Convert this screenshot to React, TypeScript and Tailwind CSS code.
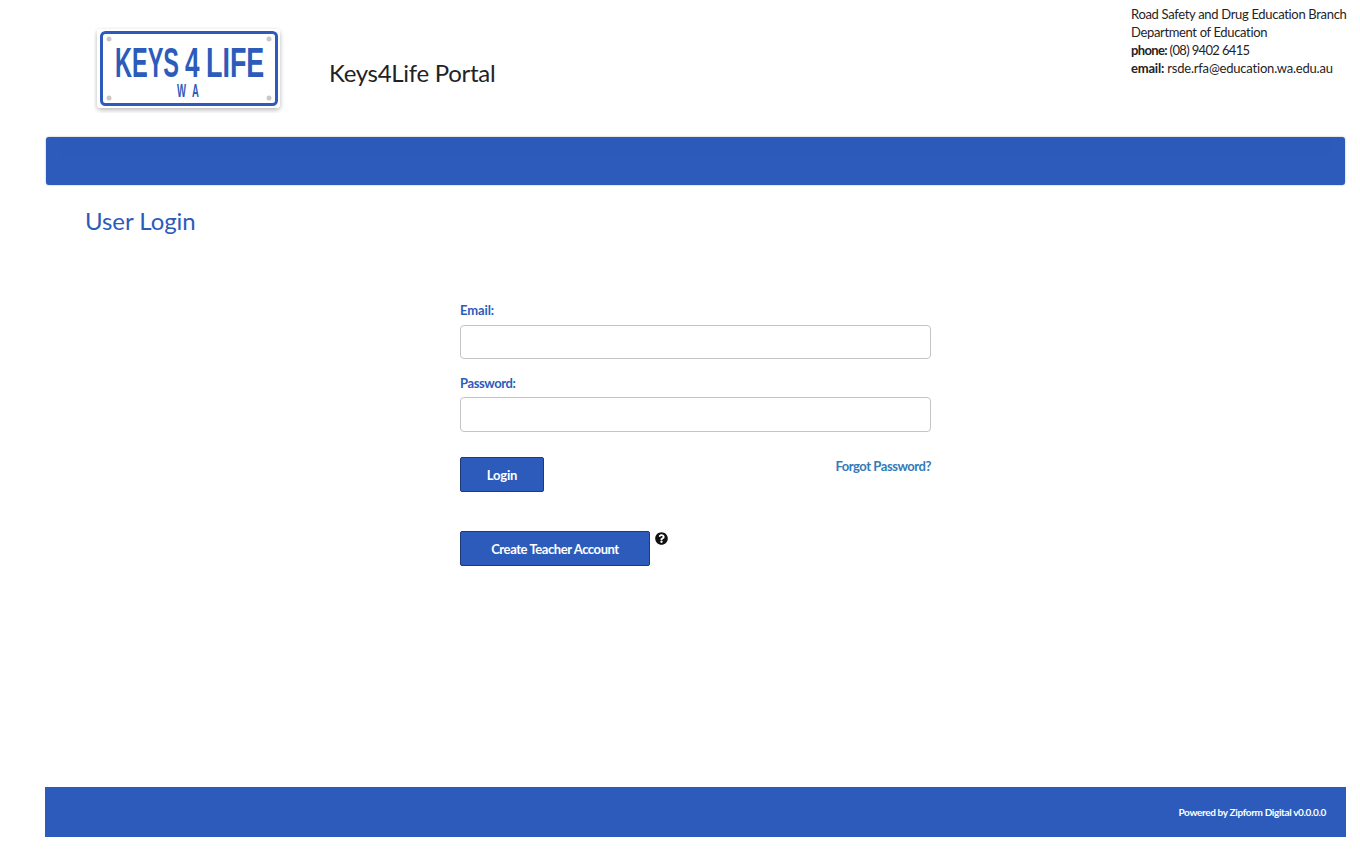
import { FaQuestionCircle } from "react-icons/fa";

const blue = "#2c5bbb";

function PlateText({ x, y, sx, size, children }: { x: number; y: number; sx: number; size: number; children: string }) {
  return (
    <text
      transform={`translate(${x} ${y}) scale(${sx} 1)`}
      fontFamily="Liberation Sans, sans-serif"
      fontWeight="700"
      fontSize={size}
      fill={blue}
    >
      {children}
    </text>
  );
}

function Logo() {
  return (
    <svg width="190" height="86" viewBox="0 0 190 86" className="block">
      <defs>
        <filter id="s" x="-10%" y="-15%" width="120%" height="135%">
          <feDropShadow dx="0" dy="2" stdDeviation="2.5" floodColor="#000" floodOpacity="0.28" />
        </filter>
      </defs>
      <rect x="3" y="2" width="183" height="79" rx="4" fill="#fff" filter="url(#s)" />
      <rect x="7.5" y="5.5" width="175" height="72" rx="4" fill="#fff" stroke={blue} strokeWidth="3" />
      <g fill="#c8c8c8">
        <circle cx="15" cy="12" r="2.5" />
        <circle cx="175" cy="12" r="2.5" />
        <circle cx="15" cy="71" r="2.5" />
        <circle cx="175" cy="71" r="2.5" />
      </g>
      <PlateText x={21} y={50} sx={0.56} size={42}>KEYS</PlateText>
      <PlateText x={91} y={50} sx={0.62} size={42}>4</PlateText>
      <PlateText x={112} y={50} sx={0.64} size={42}>LIFE</PlateText>
      <PlateText x={83} y={70} sx={0.5} size={19}>W</PlateText>
      <PlateText x={98} y={70} sx={0.5} size={19}>A</PlateText>
    </svg>
  );
}

function Field({ label, labelClass, inputClass }: { label: string; labelClass: string; inputClass: string }) {
  return (
    <div className="flex flex-col">
      <label className={labelClass}>{label}</label>
      <input className={inputClass} />
    </div>
  );
}

export default function App() {
  return (
    <div className="h-[856px] overflow-hidden bg-white text-[#1f2326] pl-[45px] pr-[14px] font-['Lato','Noto_Sans',sans-serif]">
      <header className="h-[137px] flex items-start">
        <div className="ml-[49px] mt-[27px]"><Logo /></div>
        <h1 className="ml-[45px] mt-[57px] text-[24px] leading-[32px] font-normal tracking-[-0.3px] whitespace-nowrap">Keys4Life Portal</h1>
        <div className="ml-auto mt-[5px] mr-[-1px] w-[216px] text-[13px] leading-[18px] whitespace-nowrap">
          <div className="tracking-[-0.32px]">Road Safety and Drug Education Branch</div>
          <div className="tracking-[-0.35px]">Department of Education</div>
          <div className="tracking-[-0.65px]"><b>phone:</b> (08) 9402 6415</div>
          <div className="tracking-[-0.2px]"><b>email:</b> rsde.rfa@education.wa.edu.au</div>
        </div>
      </header>

      <nav className="mx-[1px] h-[48px] rounded-[3px] bg-[#2c5bbb] shadow-[0_0_2px_rgba(0,0,0,0.35)] pl-[15px] pr-[14px]">
        <div className="h-[19px] rounded-b-[3px] bg-[#2b5ab8]" />
      </nav>

      <h2 className="ml-[40px] mt-[19px] text-[24px] leading-[34px] font-normal text-[#2c5bbb] tracking-[-0.05px]">User Login</h2>

      <main className="ml-[415px] mt-[63px] w-[471px] h-[486px] flex flex-col">
        <div className="flex flex-col gap-[15px]">
          <Field label="Email:" labelClass="h-[24px] text-[13px] leading-[18px] font-bold text-[#2c5bbb] tracking-[-0.1px]" inputClass="w-full h-[34px] rounded-[4px] border border-[#c4c4c4] bg-white" />
          <Field label="Password:" labelClass="h-[23px] text-[13px] leading-[18px] font-bold text-[#2c5bbb] tracking-[-0.4px]" inputClass="w-full h-[35px] rounded-[4px] border border-[#c4c4c4] bg-white" />
        </div>
        <div className="flex justify-between items-start mt-[25px]">
          <button className="w-[84px] h-[35px] pt-[2px] rounded-[2px] border border-[#1f3a78] bg-[#2c5bbb] text-white text-[13px] font-bold tracking-[-0.2px]">Login</button>
          <a className="text-[13px] leading-[18px] font-bold text-[#337ab7] tracking-[-0.45px] whitespace-nowrap">Forgot Password?</a>
        </div>
        <div className="flex items-start gap-[5px] mt-[39px]">
          <button className="w-[190px] h-[35px] pt-[2px] rounded-[2px] border border-[#1f3a78] bg-[#2c5bbb] text-white text-[13px] font-bold tracking-[-0.42px]">Create Teacher Account</button>
          <FaQuestionCircle className="mt-[1px] w-[13px] h-[13px] text-[#111]" />
        </div>
      </main>
      <footer className="h-[50px] bg-[#2c5bbb] flex items-center justify-end pr-[20px] text-white text-[10px] font-bold tracking-[-0.35px]">
        Powered by Zipform Digital v0.0.0.0
      </footer>
    </div>
  );
}
